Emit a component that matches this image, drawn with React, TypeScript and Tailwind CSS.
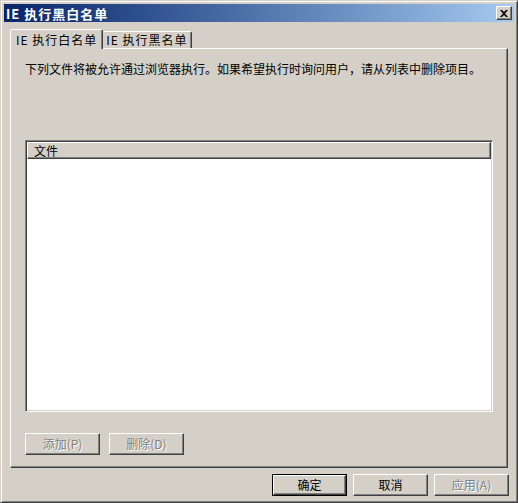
import React from "react";

const font = { fontFamily: '"Noto Sans CJK SC", "Liberation Sans", sans-serif' };

const Btn = ({
  label,
  disabled,
  isDefault,
}: {
  label: string;
  disabled?: boolean;
  isDefault?: boolean;
}) => (
  <div
    className={
      "w-[75px] h-[22px] flex items-center justify-center text-[12px] leading-none " +
      (isDefault ? "border border-black " : "")
    }
  >
    <div
      className={
        "w-full h-full flex items-center justify-center border-t border-l border-white border-r border-b border-r-[#404040] border-b-[#404040] shadow-[inset_-1px_-1px_0_#808080] " +
        (disabled ? "text-[#808080] [text-shadow:1px_1px_0_#ffffff]" : "text-black")
      }
    >
      {label}
    </div>
  </div>
);

export default function App() {
  return (
    <div
      style={font}
      className="w-[518px] h-[503px] bg-[#d4d0c8] border-t border-l border-[#d4d0c8] border-r border-b border-r-[#404040] border-b-[#404040] shadow-[inset_1px_1px_0_#ffffff,inset_-1px_-1px_0_#808080] p-[3px] flex flex-col text-black select-none"
    >
      {/* Title bar */}
      <div className="h-[18px] flex items-center justify-between pl-[2px] pr-[2px] bg-gradient-to-r from-[#0a246a] to-[#a6caf0]">
        <span className="text-white font-bold text-[13px] tracking-[1px] leading-none">IE 执行黑白名单</span>
        <div className="w-[16px] h-[14px] bg-[#d4d0c8] border-t border-l border-white border-r border-b border-r-[#404040] border-b-[#404040] shadow-[inset_-1px_-1px_0_#808080] flex items-center justify-center">
          <svg width="8" height="7" viewBox="0 0 8 7">
            <path d="M0 0h2l2 2 2-2h2L5 3.5 8 7H6L4 5 2 7H0l3-3.5z" fill="#000" />
          </svg>
        </div>
      </div>

      {/* Tabs */}
      <div className="flex items-end pl-[6px] mt-[7px] h-[19px]">
        <div className="relative z-10 h-[20px] -mb-[1px] px-[5px] flex items-center bg-[#d4d0c8] border-t border-l border-white border-r border-r-[#404040] shadow-[inset_-1px_0_0_#808080] rounded-t-[2px] text-[12px] tracking-[1px] leading-none">
          IE 执行白名单
        </div>
        <div className="h-[17px] px-[3px] flex items-center border-t border-white border-r border-r-[#404040] shadow-[inset_-1px_0_0_#808080] rounded-t-[2px] text-[12px] tracking-[1px] leading-none">
          IE 执行黑名单
        </div>
      </div>

      {/* Panel */}
      <div className="mx-[6px] h-[420px] border-t border-l border-white border-r border-b border-r-[#404040] border-b-[#404040] shadow-[inset_-1px_-1px_0_#808080] px-[14px] pt-[13px] flex flex-col">
        <div className="text-[12px] leading-[14px]">
          下列文件将被允许通过浏览器执行。如果希望执行时询问用户，请从列表中删除项目。
        </div>

        {/* List view */}
        <div className="mt-[64px] h-[272px] bg-white border-t border-l border-[#808080] border-r border-b border-r-white border-b-white shadow-[inset_1px_1px_0_#404040,inset_-1px_-1px_0_#d4d0c8] p-[1px] flex flex-col">
          <div className="h-[17px] bg-[#d4d0c8] border-t border-l border-white border-r border-b border-r-[#404040] border-b-[#404040] shadow-[inset_-1px_-1px_0_#808080] flex items-center pl-[6px] text-[12px] leading-none">
            文件
          </div>
        </div>

        {/* List buttons */}
        <div className="flex gap-[9px] mt-[21px]">
          <Btn label="添加(P)" disabled />
          <Btn label="删除(D)" disabled />
        </div>
      </div>

      {/* Dialog buttons */}
      <div className="flex justify-end gap-[6px] pr-[5px] mt-[6px]">
        <Btn label="确定" isDefault />
        <Btn label="取消" />
        <Btn label="应用(A)" disabled />
      </div>
    </div>
  );
}
